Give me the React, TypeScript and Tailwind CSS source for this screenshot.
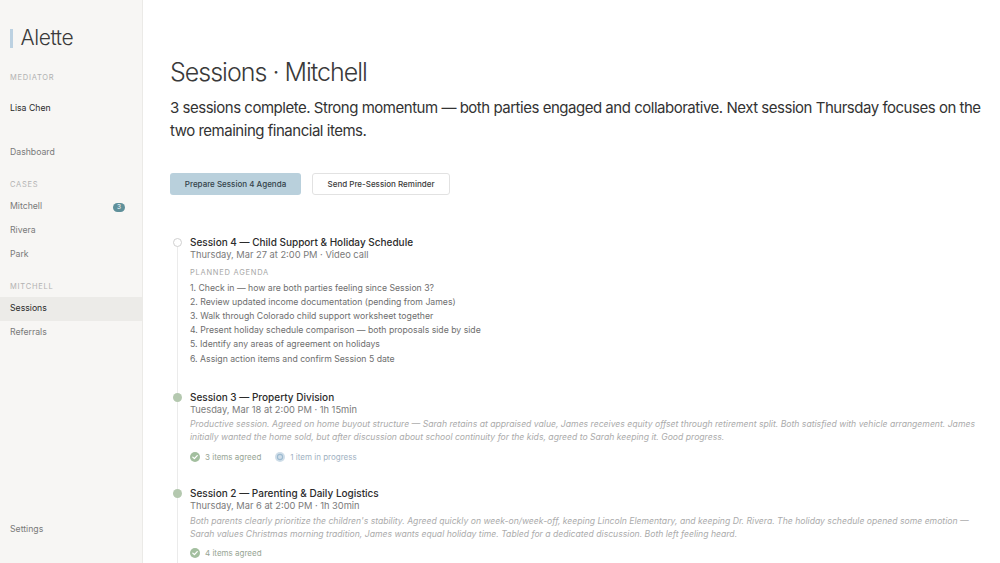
import React from "react"

const agenda = [
  "Check in — how are both parties feeling since Session 3?",
  "Review updated income documentation (pending from James)",
  "Walk through Colorado child support worksheet together",
  "Present holiday schedule comparison — both proposals side by side",
  "Identify any areas of agreement on holidays",
  "Assign action items and confirm Session 5 date",
]

function CheckDot() {
  return (
    <svg width="10" height="10" viewBox="0 0 10 10" className="shrink-0">
      <circle cx="5" cy="5" r="5" fill="#a3bf9f" />
      <path d="M2.8 5.1 L4.4 6.6 L7.2 3.6" stroke="#fff" strokeWidth="1.3" fill="none" strokeLinecap="round" strokeLinejoin="round" />
    </svg>
  )
}

function ProgressDot() {
  return (
    <svg width="10" height="10" viewBox="0 0 10 10" className="shrink-0">
      <circle cx="5" cy="5" r="5" fill="#cfdde8" />
      <circle cx="5" cy="5" r="2.6" fill="none" stroke="#9dbbd1" strokeWidth="1.1" />
    </svg>
  )
}

function NavItem({ label, active, badge }: { label: string; active?: boolean; badge?: string }) {
  return (
    <div
      className={`h-[24px] flex items-center justify-between pl-[10px] pr-[17px] text-[8.7px] ${
        active ? "bg-[#ecebe8] text-[#2a2a2a]" : "text-[#7a7a7a]"
      }`}
    >
      <span>{label}</span>
      {badge && (
        <span className="h-[9px] px-[4px] rounded-full bg-[#5f909a] text-white text-[6.5px] leading-[9px]">
          {badge}
        </span>
      )}
    </div>
  )
}

function Label({ children }: { children: React.ReactNode }) {
  return (
    <div className="h-[12px] flex items-center pl-[10px] text-[7.5px] tracking-[0.1em] text-[#b2b2b2] uppercase">
      {children}
    </div>
  )
}

export default function App() {
  return (
    <div className="flex h-[563px] w-[1000px] overflow-hidden bg-white font-['Inter',sans-serif]">
      {/* Sidebar */}
      <aside className="w-[143px] shrink-0 flex flex-col bg-[#f7f6f4] border-r border-[#ebeae7] pt-[26px] pb-[21px]">
        <div className="h-[24px] flex items-center pl-[10px] gap-[8px]">
          <div className="w-[2.5px] h-[19px] bg-[#bcd1e1]" />
          <span className="text-[21px] font-light text-[#3a3a3a] tracking-[-0.02em]">Alette</span>
        </div>
        <div className="mt-[22px]">
          <Label>Mediator</Label>
        </div>
        <div className="mt-[13px] h-[24px] flex items-center pl-[10px] text-[8.7px] text-[#2a2a2a]">Lisa Chen</div>
        <div className="mt-[20px]">
          <NavItem label="Dashboard" />
        </div>
        <div className="mt-[14px]">
          <Label>Cases</Label>
        </div>
        <div className="mt-[4px]">
          <NavItem label="Mitchell" badge="3" />
          <NavItem label="Rivera" />
          <NavItem label="Park" />
        </div>
        <div className="mt-[14px]">
          <Label>Mitchell</Label>
        </div>
        <div className="mt-[4px]">
          <NavItem label="Sessions" active />
          <NavItem label="Referrals" />
        </div>
        <div className="mt-auto">
          <NavItem label="Settings" />
        </div>
      </aside>

      {/* Main */}
      <main className="flex-1 pl-[27px] pr-[6px] pt-[54px]">
        <h1 className="text-[25px] leading-[36px] font-light text-[#3a3a3a] tracking-[-0.04em]">
          Sessions · Mitchell
        </h1>
        <p className="mt-[6px] text-[15px] leading-[23px] text-[#333] tracking-[-0.032em]">
          3 sessions complete. Strong momentum — both parties engaged and collaborative. Next session Thursday focuses on the two remaining financial items.
        </p>

        <div className="mt-[31px] flex gap-[11px]">
          <button className="h-[22px] w-[131px] rounded-[3px] bg-[#b9d0dc] text-[8px] font-medium text-[#33424a]">
            Prepare Session 4 Agenda
          </button>
          <button className="h-[22px] w-[138px] rounded-[3px] bg-white border border-[#e2e2e2] text-[8px] font-medium text-[#3a3a3a]">
            Send Pre-Session Reminder
          </button>
        </div>

        {/* Timeline */}
        <div className="relative mt-[41px] pl-[20px] pr-[8px]">
          <div className="absolute left-[7px] top-[6px] bottom-[-100px] w-px bg-[#ebebeb]" />

          {/* Session 4 */}
          <div className="relative">
            <div className="absolute left-[-17.5px] top-[2px] w-[9px] h-[9px] rounded-full bg-white border border-[#d0d0d0]" />
            <div className="text-[10px] leading-[13px] text-[#2b2b2b] font-medium">
              Session 4 — Child Support &amp; Holiday Schedule
            </div>
            <div className="text-[9.3px] leading-[12px] text-[#7a7a7a]">Thursday, Mar 27 at 2:00 PM · Video call</div>
            <div className="mt-[6.5px] h-[10px] text-[7.5px] leading-[10px] tracking-[0.1em] text-[#a8a8a8] uppercase">
              Planned agenda
            </div>
            <ol className="mt-[3px] text-[8.7px] leading-[14.2px] text-[#6e6e6e]">
              {agenda.map((a, i) => (
                <li key={i}>
                  {i + 1}. {a}
                </li>
              ))}
            </ol>
          </div>

          {/* Session 3 */}
          <div className="relative mt-[25.5px]">
            <div className="absolute left-[-17.5px] top-[2px] w-[9px] h-[9px] rounded-full bg-[#b4c8af]" />
            <div className="text-[10px] leading-[13px] text-[#2b2b2b] font-medium">Session 3 — Property Division</div>
            <div className="text-[9.3px] leading-[12px] text-[#7a7a7a]">Tuesday, Mar 18 at 2:00 PM · 1h 15min</div>
            <p className="mt-[1.5px] text-[8.65px] leading-[13.5px] italic text-[#ababab]">
              Productive session. Agreed on home buyout structure — Sarah retains at appraised value, James receives equity offset through retirement split. Both satisfied with vehicle arrangement. James initially wanted the home sold, but after discussion about school continuity for the kids, agreed to Sarah keeping it. Good progress.
            </p>
            <div className="mt-[6px] h-[12px] flex items-center gap-[14px] text-[8px] text-[#97a594]">
              <span className="flex items-center gap-[5px]">
                <CheckDot />3 items agreed
              </span>
              <span className="flex items-center gap-[5px] text-[#9fb2c2]">
                <ProgressDot />1 item in progress
              </span>
            </div>
          </div>

          {/* Session 2 */}
          <div className="relative mt-[24.5px]">
            <div className="absolute left-[-17.5px] top-[2px] w-[9px] h-[9px] rounded-full bg-[#b4c8af]" />
            <div className="text-[10px] leading-[13px] text-[#2b2b2b] font-medium">Session 2 — Parenting &amp; Daily Logistics</div>
            <div className="text-[9.3px] leading-[12px] text-[#7a7a7a]">Thursday, Mar 6 at 2:00 PM · 1h 30min</div>
            <p className="mt-[2.5px] text-[8.65px] leading-[13.5px] italic text-[#ababab]">
              Both parents clearly prioritize the children's stability. Agreed quickly on week-on/week-off, keeping Lincoln Elementary, and keeping Dr. Rivera. The holiday schedule opened some emotion — Sarah values Christmas morning tradition, James wants equal holiday time. Tabled for a dedicated discussion. Both left feeling heard.
            </p>
            <div className="mt-[5px] h-[12px] flex items-center gap-[14px] text-[8px] text-[#97a594]">
              <span className="flex items-center gap-[5px]">
                <CheckDot />4 items agreed
              </span>
            </div>
          </div>
        </div>
      </main>
    </div>
  )
}
